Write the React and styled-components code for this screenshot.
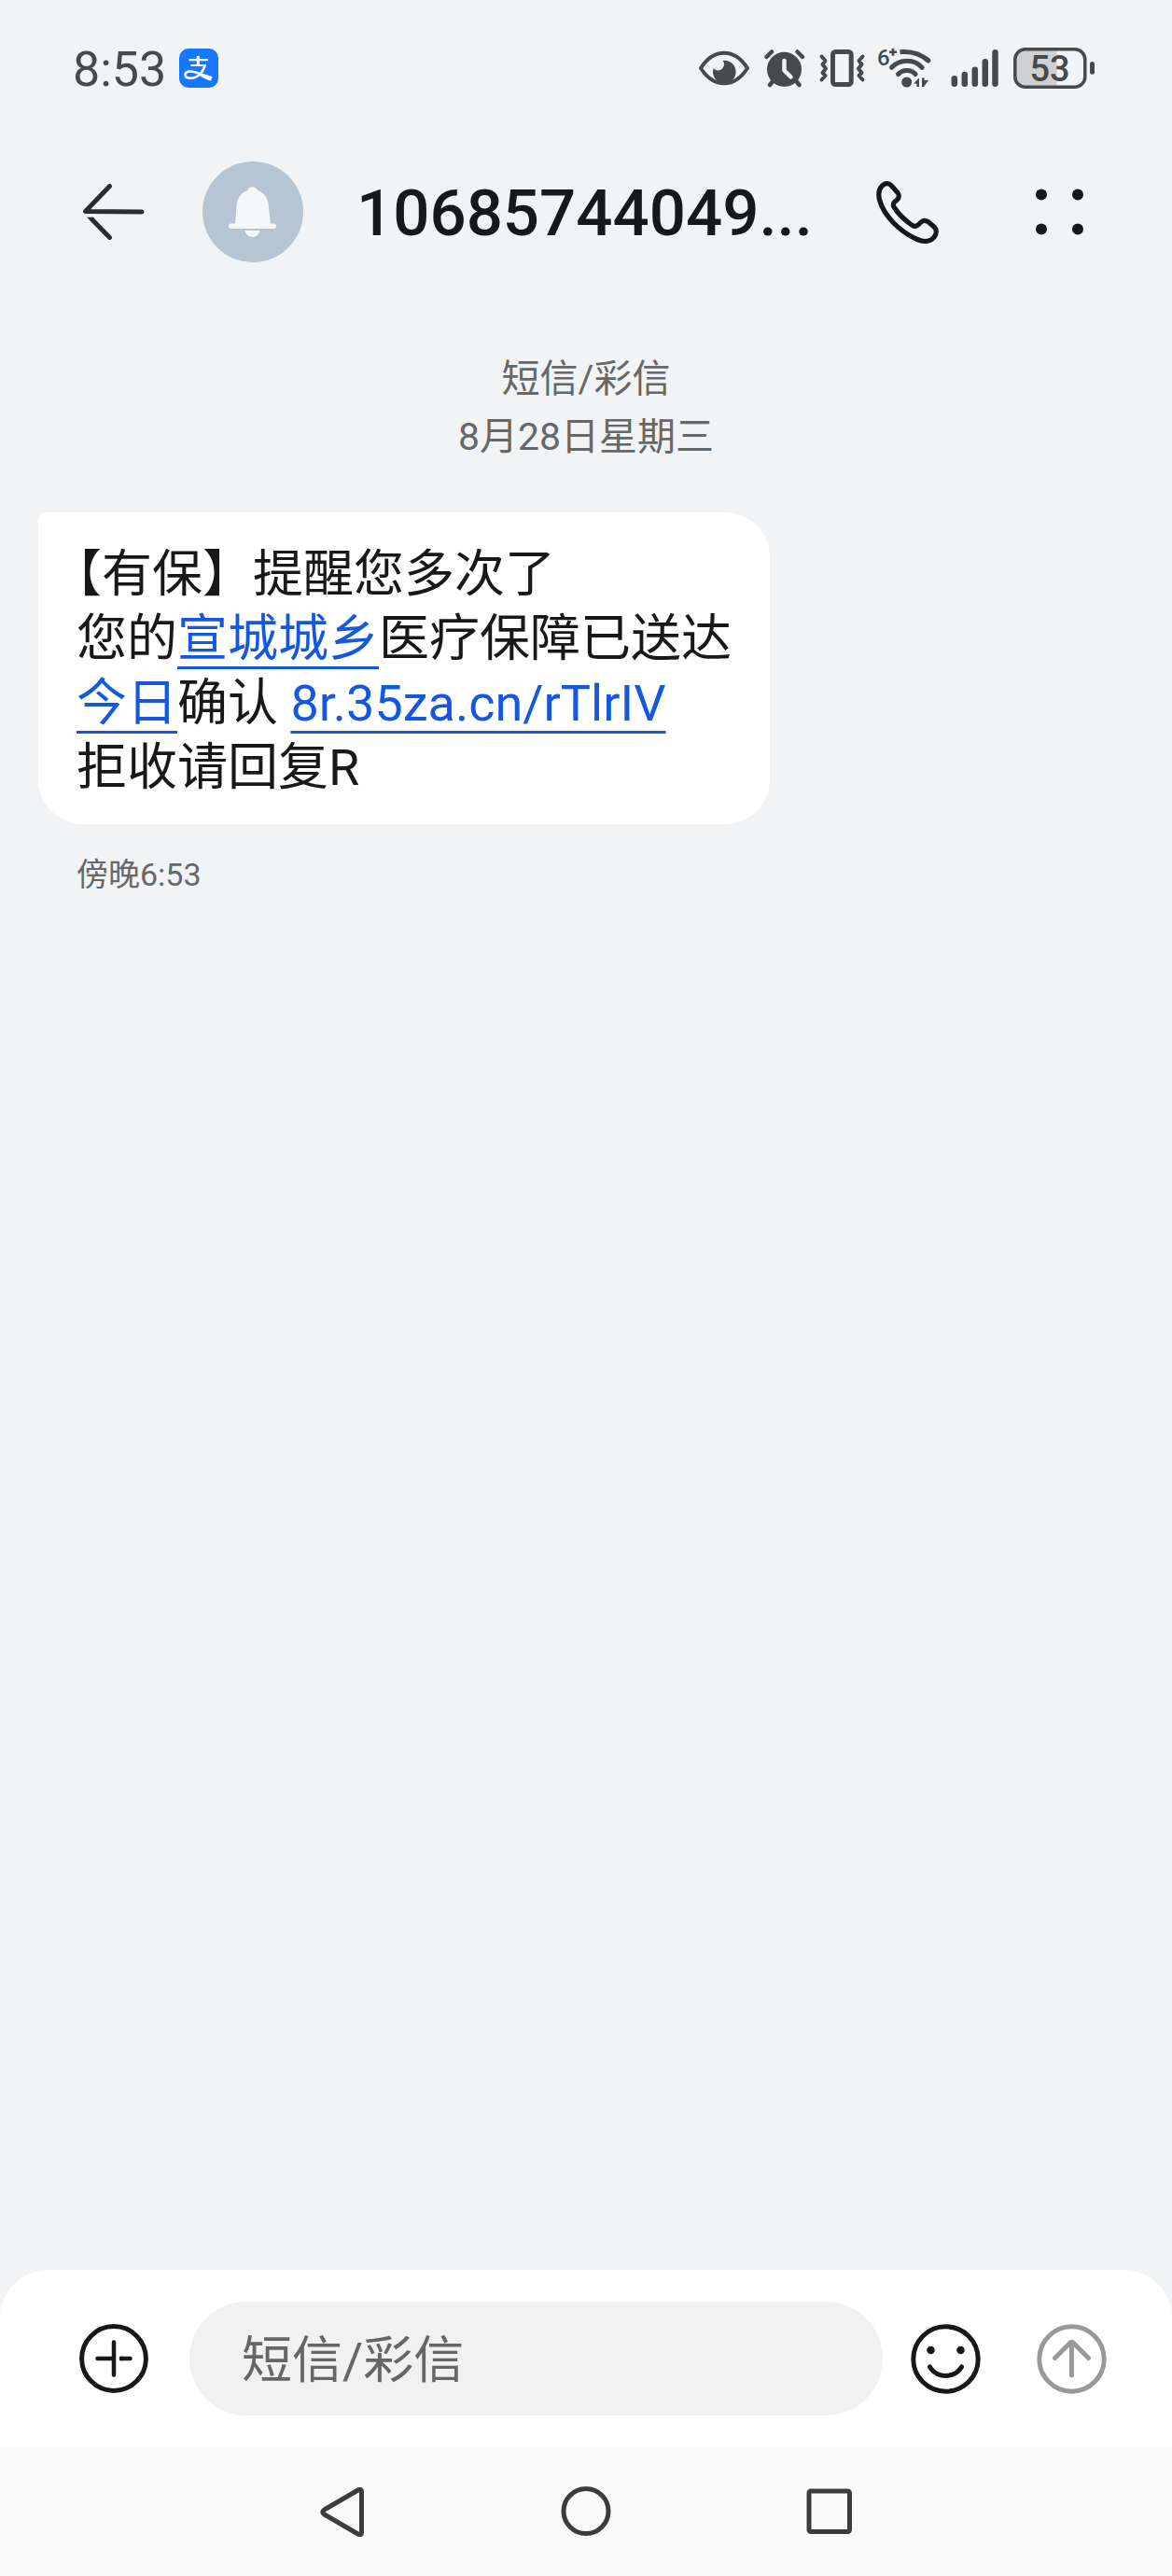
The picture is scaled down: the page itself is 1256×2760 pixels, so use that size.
import styled, { createGlobalStyle } from 'styled-components';

export default function App() {
    return (
        <Screen>
            <GlobalStyle />
            <StatusBar />
            <ChatHeader />
            <Messages />
            <Composer />
            <NavBar />
        </Screen>
    )
}

function StatusBar() {
    return (
        <Status>
            <Clock>8:53</Clock>
            <AlipayLogo />
            <StatusIcons>
                <EyeIcon />
                <AlarmIcon />
                <VibrateIcon />
                <WifiIcon />
                <SignalIcon />
                <BatteryIcon level="53" />
            </StatusIcons>
        </Status>
    )
}

function ChatHeader() {
    return (
        <Header>
            <IconButton aria-label="返回">
                <svg width="66" height="60" viewBox="0 0 66 60" fill="none" stroke="#2c2d2f" strokeWidth="5" strokeLinecap="round" strokeLinejoin="round">
                    <path d="M28.5 2.5L2.5 29.5L63 30" />
                    <path d="M10 38.5L28.5 57.5" />
                    <path d="M4 35.7h7l3 4-4 2z" fill="#2c2d2f" stroke="none" />
                </svg>
            </IconButton>
            <Avatar>
                <svg width="108" height="108" viewBox="0 0 108 108" fill="#f5f8fb">
                    <path d="M35 68C36 58 36 52 37 45C38 38 42 33 48.500 31C50 26 57 26 59 31C66 33 69.500 39 70.500 45C71.500 52 72 60 73 68z" />
                    <rect x="28" y="66.500" width="51" height="5.500" rx="2.700" />
                    <path d="M45.500 74h16c-1 4-4 7-8 7s-7-3-8-7z" />
                </svg>
            </Avatar>
            <Title>10685744049...</Title>
            <IconButton aria-label="拨打电话">
                <svg width="67" height="67" viewBox="0 0 67 67" fill="none" stroke="#17181a" strokeWidth="5.200" strokeLinejoin="round">
                    <path d="M16 4.500L23 12.500C25 15 24.500 18 22.500 20L19.500 22.500C18 24.500 18 26.500 19.500 28.500C24 35.500 31 42 38 47C40.500 49 43 49 45.500 46.500L48 44C50 42 53 42 55.500 43.500L61.500 48.500C65 51.500 65 56 62.500 59.500C59 64.500 52 66 44 62.500C25 54 8 37 3.500 20C2 13.500 3 8 7 4.500C10 2 13.500 2 16 4.500z" />
                </svg>
            </IconButton>
            <IconButton aria-label="更多">
                <svg width="52" height="50" viewBox="0 0 52 50" fill="#17181a">
                    <circle cx="6" cy="6.500" r="6" />
                    <circle cx="45" cy="6.500" r="6" />
                    <circle cx="6" cy="43.500" r="6" />
                    <circle cx="45" cy="43.500" r="6" />
                </svg>
            </IconButton>
        </Header>
    )
}

function Messages() {
    return (
        <Thread>
            <DateLabel>
                短信/彩信<br />
                8月28日星期三
            </DateLabel>
            <Bubble>
                【有保】提醒您多次了<br />
                您的<Link href="#place">宣城城乡</Link>医疗保障已送达<br />
                <Link href="#date">今日</Link>确认 <Link href="#link">8r.35za.cn/rTlrIV</Link><br />
                拒收请回复R
            </Bubble>
            <Time>傍晚6:53</Time>
        </Thread>
    )
}

function Composer() {
    return (
        <ComposerBar>
            <IconButton aria-label="添加">
                <svg width="75" height="75" viewBox="0 0 75 75" fill="none" stroke="#17181a" strokeWidth="4.500" strokeLinecap="round">
                    <circle cx="37" cy="37" r="34.400" strokeWidth="5" />
                    <path d="M37 19.500v35M19.500 37H37M45 37h9.500" />
                    <path d="M43 37h4" strokeLinecap="butt" />
                </svg>
            </IconButton>
            <MessageInput type="text" placeholder="短信/彩信" aria-label="短信/彩信" />
            <IconButton aria-label="表情">
                <svg width="75" height="75" viewBox="0 0 75 75" fill="none" stroke="#17181a" strokeWidth="5" strokeLinecap="round">
                    <circle cx="37.500" cy="37.500" r="34.700" />
                    <circle cx="21.500" cy="28" r="4.300" fill="#17181a" stroke="none" />
                    <circle cx="53.500" cy="28" r="4.300" fill="#17181a" stroke="none" />
                    <path d="M20.500 46C28 58.500 47 58.500 54.500 46" />
                </svg>
            </IconButton>
            <IconButton aria-label="发送">
                <svg width="75" height="75" viewBox="0 0 75 75" fill="none" stroke="#999" strokeWidth="5" strokeLinecap="round" strokeLinejoin="round">
                    <circle cx="37.500" cy="37.500" r="34.700" />
                    <path d="M37.500 55V20M19.500 36.500L35.500 20.500Q37.500 18.500 39.500 20.500L55.500 36.500" />
                </svg>
            </IconButton>
        </ComposerBar>
    )
}

function NavBar() {
    return (
        <Nav>
            <NavButton aria-label="后退">
                <svg width="54" height="54" viewBox="0 0 54 54">
                    <path d="M44.500 3.500Q47.500 2.500 47.500 5.500V49.500Q47.500 52.500 44.500 51.500L7.500 30Q4 27.500 7.500 25z" />
                </svg>
            </NavButton>
            <NavButton aria-label="主屏幕">
                <svg width="54" height="54" viewBox="0 0 54 54">
                    <circle cx="27" cy="26.500" r="24" />
                </svg>
            </NavButton>
            <NavButton aria-label="最近任务">
                <svg width="54" height="54" viewBox="0 0 54 54">
                    <rect x="5" y="5" width="43.500" height="43.500" rx="2" />
                </svg>
            </NavButton>
        </Nav>
    )
}

function AlipayLogo() {
    return (
        <svg width="42" height="42" viewBox="0 0 42 42" fill="none" stroke="#fff">
            <rect width="42" height="42" rx="10" fill="#1677ff" stroke="none" />
            <path d="M10.500 12.200h20.500M12.500 18h15" strokeWidth="2.200" />
            <path d="M20.300 8v10" strokeWidth="3.200" />
            <path d="M28 17C26 25 20 31.700 12.500 31.700C4.500 31.700 4.500 24.500 12 24.500C18 24.500 25 28.500 31 30" strokeWidth="2.600" />
            <path d="M21 26l14.500 4-1.500 4.500C29 33.500 25 31 20.500 28z" fill="#fff" stroke="none" />
        </svg>
    )
}

function EyeIcon() {
    return (
        <svg width="56" height="44" viewBox="0 0 56 44" fill="#48494b">
            <path d="M2 22C9 11 18 5.700 27 5.700S45 11 52 22C45 33 36 38.300 27 38.300S9 33 2 22z" fill="none" stroke="#48494b" strokeWidth="4" strokeLinejoin="round" />
            <circle cx="27.300" cy="26" r="12.300" />
            <circle cx="20.500" cy="18" r="6.500" fill="#f1f3f5" />
        </svg>
    )
}

function AlarmIcon() {
    return (
        <svg width="45" height="44" viewBox="0 0 45 44" fill="none" stroke="#48494b" strokeWidth="4.500" strokeLinecap="round" strokeLinejoin="round">
            <circle cx="21.500" cy="23.300" r="18.500" fill="#48494b" stroke="none" />
            <path d="M2.500 10L8 4.500M35.500 4.500L41 10M6 40l4-5M37.500 40l-4-5" />
            <path d="M21.500 14v10.500L28.500 31.500" stroke="#f1f3f5" />
        </svg>
    )
}

function VibrateIcon() {
    return (
        <svg width="48" height="44" viewBox="0 0 48 44" overflow="visible" fill="none" stroke="#48494b" strokeWidth="4" strokeLinecap="round" strokeLinejoin="round">
            <rect x="14.500" y="4.500" width="19.700" height="35" rx="3" strokeWidth="5" />
            <path d="M2.500 9.500l4 4.500-3 4 3.500 4.500-3.500 4.500 3 3-4 4.500M46.500 9.500l-4 4.500 3 4-3.500 4.500 3.500 4.500-3 3 4 4.500" />
        </svg>
    )
}

function WifiIcon() {
    return (
        <svg width="65" height="60" viewBox="0 -8 65 60" fill="none" stroke="#48494b" strokeWidth="5">
            <SvgText x="0" y="19" $size={24}>6</SvgText>
            <path d="M13 4.700h8M17 .7v8" strokeWidth="2.600" />
            <path d="M24.500 4.700C36 3.500 47 7 55 14M15.500 21.300C24.500 12 40 12 48 21.300M22.500 28.500C27.500 23 36.500 23 41 28.500" />
            <path d="M53 12.300l2 1.700M15.500 21.300l.1-.1M48 21.300l.1.100M22.500 28.500l.1-.1M41 28.500l.1.100" strokeLinecap="round" />
            <circle cx="31.700" cy="37" r="5.500" fill="#48494b" stroke="none" />
            <path d="M39 38.500l6-6V42h-2.500v-3.500zM48 32.500h2.500V35H55l-5 7h-2z" fill="#48494b" stroke="none" />
        </svg>
    )
}

function SignalIcon() {
    return (
        <svg width="53" height="44" viewBox="0 0 53 44" stroke="#48494b" strokeWidth="6.500" strokeLinecap="round">
            <path d="M3.800 33.200v5.500M14.800 29v9.700M25.800 23.700v15M36.800 15.300v23.400M47.500 5.300v33.400" />
        </svg>
    )
}

function BatteryIcon({ level }) {
    return (
        <svg width="87" height="44" viewBox="0 0 87 44">
            <path d="M12 2h34.500v40H12Q2 42 2 32V12Q2 2 12 2z" fill="#cfd0d2" />
            <rect x="1.800" y="1.800" width="75" height="40.400" rx="11" fill="none" stroke="#48494b" strokeWidth="3.500" />
            <rect x="82" y="15" width="5" height="13.700" rx="2.500" fill="#48494b" />
            <SvgText x="39" y="36" textAnchor="middle" $size={38}>{level}</SvgText>
        </svg>
    )
}

const GlobalStyle = createGlobalStyle`
    *, *::before, *::after {
        box-sizing: border-box;
    }

    body {
        margin: 0;
        background-color: #f1f3f5;
        color: #17181a;
        font-family: Roboto, "Noto Sans CJK SC", sans-serif;
    }

    button, input {
        font-family: inherit;
    }

    svg {
        display: block;
        flex-shrink: 0;
    }
`;

const Screen = styled.div`
    display: flex;
    flex-direction: column;
    min-height: 100vh;
`;

const Status = styled.div`
    display: flex;
    align-items: center;
    height: 146px;
    padding: 0 83px 0 78px;
    color: #48494b;
`;

const Clock = styled.span`
    width: 114px;
    padding-top: 3px;
    font-size: 52px;
    line-height: 60px;
`;

const StatusIcons = styled.div`
    display: flex;
    align-items: center;
    gap: 14px;
    margin-left: auto;
`;

const SvgText = styled.text`
    font-size: ${props => props.$size}px;
    font-weight: 500;
    fill: #48494b;
    stroke: none;
`;

const Header = styled.header`
    display: flex;
    align-items: center;
    height: 162px;
    padding: 0 94px 0 89px;
`;

const IconButton = styled.button`
    flex-shrink: 0;
    padding: 0;
    border: 0;
    background: none;
    cursor: pointer;
`;

const Avatar = styled.div`
    margin: 0 57px 0 62px;
    border-radius: 50%;
    background-color: #b7c4d2;
`;

const Title = styled.h1`
    flex: 1;
    margin: 0;
    padding-top: 4px;
    font-size: 69px;
    font-weight: 500;
    line-height: 84px;
    white-space: nowrap;

    & + button {
        margin-right: 104px;
    }
`;

const Thread = styled.main`
    display: flex;
    flex: 1;
    flex-direction: column;
    align-items: flex-start;
    padding: 67px 41px;
`;

const DateLabel = styled.p`
    align-self: center;
    margin: 0 0 50px;
    color: #666769;
    font-size: 41px;
    line-height: 62px;
    text-align: center;
`;

const Bubble = styled.div`
    padding: 32px 41px 26px;
    border-radius: 8px 48px 48px 48px;
    background-color: #fff;
    font-size: 54px;
    line-height: 69px;
    text-spacing-trim: trim-start;
`;

const Link = styled.a`
    color: #1558e0;
    text-decoration: underline 3px;
    text-underline-offset: 11px;
    text-decoration-skip-ink: none;
`;

const Time = styled.time`
    margin: 30px 0 0 41px;
    color: #666769;
    font-size: 34px;
    line-height: 48px;
`;

const ComposerBar = styled.div`
    display: flex;
    align-items: center;
    padding: 34px 70px 34px 85px;
    border-radius: 52px 52px 0 0;
    background-color: #fff;
`;

const MessageInput = styled.input`
    flex: 1;
    min-width: 0;
    height: 122px;
    margin: 0 30px 0 43px;
    padding: 4px 56px 0;
    border: 0;
    border-radius: 61px;
    background-color: #f1f1f1;
    font-size: 54px;

    &::placeholder {
        color: #666;
        opacity: 1;
    }

    & + button {
        margin-right: 60px;
    }
`;

const Nav = styled.nav`
    display: flex;
    justify-content: center;
    height: 138px;
    background-color: #fafafa;
`;

const NavButton = styled(IconButton)`
    display: flex;
    align-items: center;
    justify-content: center;
    width: 261px;

    svg {
        fill: none;
        stroke: #3c3c3c;
        stroke-width: 5;
        stroke-linejoin: round;
    }
`;
